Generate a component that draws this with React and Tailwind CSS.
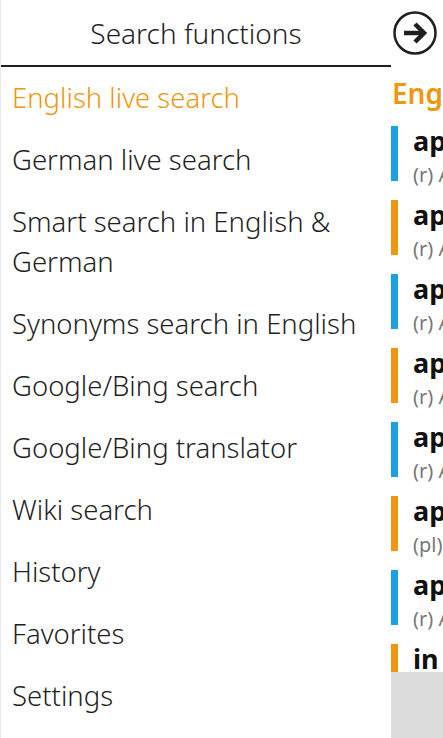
const menu = [
  'English live search',
  'German live search',
  'Smart search in English & German',
  'Synonyms search in English',
  'Google/Bing search',
  'Google/Bing translator',
  'Wiki search',
  'History',
  'Favorites',
  'Settings',
];

const results = [
  { word: 'apple', sub: '(r) Apfel', color: 'bg-[#1ba1e2]' },
  { word: 'apple', sub: '(r) Apfel', color: 'bg-[#f0960f]' },
  { word: 'apple', sub: '(r) Apfel', color: 'bg-[#1ba1e2]' },
  { word: 'apple', sub: '(r) Apfel', color: 'bg-[#f0960f]' },
  { word: 'apple', sub: '(r) Apfel', color: 'bg-[#1ba1e2]' },
  { word: 'apples', sub: '(pl) Äpfel', color: 'bg-[#f0960f]' },
  { word: 'apple', sub: '(r) Apfel', color: 'bg-[#1ba1e2]' },
  { word: 'in', sub: '(r) Apfel', color: 'bg-[#f0960f]' },
];

export default function App() {
  return (
    <div className="flex h-[738px] w-[443px] overflow-hidden bg-white font-['Noto_Sans',sans-serif] text-[#1f1f1f]">
      <div className="flex w-[391px] shrink-0 flex-col border-l border-[#ececec]">
        <div className="flex h-[65px] items-center justify-center text-[28px] font-light">
          Search functions
        </div>
        <div className="h-[2px] bg-[#1f1f1f]" />
        <ul className="flex flex-col gap-[22px] pt-[11px] pl-[11px]">
          {menu.map((m, i) => (
            <li
              key={m}
              className={`text-[27.5px] leading-[40px] font-light ${i === 0 ? 'text-[#f0960f]' : ''}`}
            >
              {m}
            </li>
          ))}
        </ul>
      </div>

      <div className="flex w-[52px] shrink-0 flex-col">
        <div className="flex h-[67px] items-start pt-[11px] pl-[1px]">
          <svg width="46" height="46" viewBox="0 0 46 46">
            <circle cx="23" cy="22" r="20.5" fill="none" stroke="#1f1f1f" strokeWidth="2.5" />
            <path d="M12 22h19" stroke="#1f1f1f" strokeWidth="4.5" fill="none" />
            <path d="M23 13l9 9-9 9" stroke="#1f1f1f" strokeWidth="4.5" fill="none" strokeLinejoin="miter" />
          </svg>
        </div>
        <div className="h-[52px] whitespace-nowrap pl-[1px] text-[28px] leading-[52px] font-semibold text-[#f0960f]">
          English
        </div>
        <div className="flex flex-1 flex-col gap-[19px] overflow-hidden pt-[7px]">
          {results.map((r, i) => (
            <div key={i} className="flex h-[55px] shrink-0 gap-[15px]">
              <div className={`w-[7px] shrink-0 ${r.color}`} />
              <div className="flex flex-col whitespace-nowrap">
                <span className="text-[27px] leading-[30px] font-bold text-[#111]">{r.word}</span>
                <span className="mt-[6px] text-[20px] leading-[26px] text-[#777]">{r.sub}</span>
              </div>
            </div>
          ))}
        </div>
        <div className="h-[66px] shrink-0 bg-[#dcdcdc]" />
      </div>
    </div>
  );
}
